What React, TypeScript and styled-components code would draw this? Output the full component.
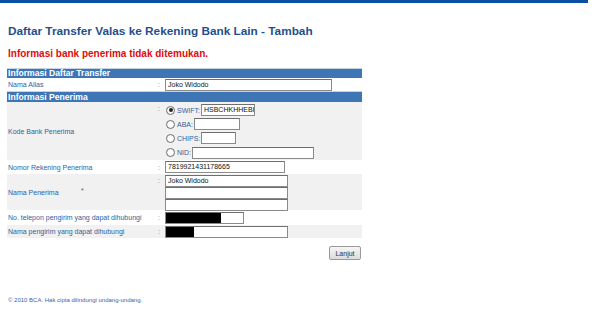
import React from "react";
import styled, { createGlobalStyle } from "styled-components";

const GlobalStyle = createGlobalStyle`
  body {
    margin: 0;
    background: #fff;
    font-family: "Liberation Sans", Arial, sans-serif;
  }
`;

const TopBar = styled.div`
  width: 588px;
  height: 3px;
  background: #0b4fa3;
`;

const Page = styled.div`
  padding: 0 7px;
`;

const Title = styled.h1`
  margin: 21px 0 0 1px;
  font-size: 11.8px;
  font-weight: bold;
  color: #1f4f8e;
  line-height: 15px;
`;

const ErrorText = styled.div`
  margin: 8px 0 0 1px;
  font-size: 10px;
  font-weight: bold;
  color: #e00b0b;
  line-height: 14px;
`;

const FormTable = styled.div`
  width: 355px;
  margin-top: 7px;
  display: flex;
  flex-direction: column;
`;

const SectionHead = styled.div<{ $h: number }>`
  height: ${(p) => p.$h}px;
  background: #3d75b5;
  border-top: 1px solid #c4d3e6;
  color: #fff;
  font-size: 8.6px;
  font-weight: bold;
  line-height: ${(p) => p.$h}px;
  padding-left: 1px;
`;

const Row = styled.div<{ $h: number; $alt?: boolean }>`
  display: grid;
  grid-template-columns: 151px 7px 1fr;
  height: ${(p) => p.$h}px;
  background: ${(p) => (p.$alt ? "#f1f1f1" : "#fff")};
`;

const Label = styled.div`
  display: flex;
  align-items: center;
  padding-left: 1px;
  font-size: 7px;
  color: #2f5f9f;
  position: relative;
`;

const Star = styled.span`
  position: absolute;
  left: 74px;
  top: 13px;
  font-size: 7px;
  color: #555;
`;

const Colon = styled.div<{ $top?: boolean }>`
  display: flex;
  align-items: ${(p) => (p.$top ? "flex-start" : "center")};
  padding-top: ${(p) => (p.$top ? "3px" : "0")};
  font-size: 7px;
  color: #888;
`;

const Cell = styled.div<{ $top?: boolean }>`
  display: flex;
  flex-direction: column;
  justify-content: ${(p) => (p.$top ? "flex-start" : "center")};
  padding-top: ${(p) => (p.$top ? "1px" : "0")};
`;

const TextBox = styled.div<{ $w: number; $h?: number }>`
  box-sizing: border-box;
  width: ${(p) => p.$w}px;
  height: ${(p) => p.$h ?? 12}px;
  border: 1px solid #8a8a8a;
  border-top-color: #6e6e6e;
  background: #fff;
  font-size: 7px;
  color: #111;
  line-height: 10px;
  padding-left: 2px;
  position: relative;
  overflow: hidden;
  white-space: nowrap;
`;

const Redact = styled.div<{ $w: number }>`
  position: absolute;
  left: 0;
  top: 0;
  bottom: 0;
  width: ${(p) => p.$w}px;
  background: #000;
`;

const RadioLine = styled.div<{ $h: number }>`
  display: flex;
  align-items: center;
  height: ${(p) => p.$h}px;
  font-size: 7px;
  color: #2f5f9f;
`;

const Radio = styled.span<{ $on?: boolean }>`
  box-sizing: border-box;
  width: 9px;
  height: 9px;
  margin: 0 2px 0 1px;
  border-radius: 50%;
  border: 1px solid #6f6f6f;
  background: radial-gradient(circle, #fff 40%, #e6e6e6 100%);
  display: flex;
  align-items: center;
  justify-content: center;

  &::after {
    content: "";
    width: 4px;
    height: 4px;
    border-radius: 50%;
    background: ${(p) => (p.$on ? "#222" : "transparent")};
  }
`;

const RadioText = styled.span`
  margin-right: 1px;
`;

const Actions = styled.div`
  width: 355px;
  display: flex;
  justify-content: flex-end;
  margin-top: 8px;
`;

const Button = styled.button`
  box-sizing: border-box;
  width: 32px;
  height: 14px;
  margin-right: 1px;
  padding: 0;
  border: 1px solid #9a9a9a;
  border-radius: 2px;
  background: linear-gradient(#f6f6f6, #dcdcdc);
  font-family: "Liberation Sans", Arial, sans-serif;
  font-size: 7px;
  color: #333;
`;

const Footer = styled.div`
  margin: 37px 0 0 1px;
  font-size: 6px;
  color: #3c63a6;
`;

const banks = [
  { name: "SWIFT:", w: 54, value: "HSBCHKHHEBI", on: true },
  { name: "ABA:", w: 46, value: "" },
  { name: "CHIPS:", w: 35, value: "" },
  { name: "NID:", w: 122, value: "" },
];

export default function App() {
  return (
    <>
      <GlobalStyle />
      <TopBar />
      <Page>
        <Title>Daftar Transfer Valas ke Rekening Bank Lain - Tambah</Title>
        <ErrorText>Informasi bank penerima tidak ditemukan.</ErrorText>

        <FormTable>
          <SectionHead $h={9}>Informasi Daftar Transfer</SectionHead>
          <Row $h={13}>
            <Label>Nama Alias</Label>
            <Colon>:</Colon>
            <Cell>
              <TextBox $w={167}>Joko Widodo</TextBox>
            </Cell>
          </Row>
          <SectionHead $h={10}>Informasi Penerima</SectionHead>
          <Row $h={58} $alt>
            <Label>Kode Bank Penerima</Label>
            <Colon $top>:</Colon>
            <Cell $top>
              {banks.map((b, i) => (
                <RadioLine key={b.name} $h={i === 3 ? 15 : 14}>
                  <Radio $on={b.on} />
                  <RadioText>{b.name}</RadioText>
                  <TextBox $w={b.w}>{b.value}</TextBox>
                </RadioLine>
              ))}
            </Cell>
          </Row>
          <Row $h={14}>
            <Label>Nomor Rekening Penerima</Label>
            <Colon>:</Colon>
            <Cell>
              <TextBox $w={120}>7819921431178665</TextBox>
            </Cell>
          </Row>
          <Row $h={36} $alt>
            <Label>
              Nama Penerima
              <Star>*</Star>
            </Label>
            <Colon $top>:</Colon>
            <Cell $top>
              <TextBox $w={123}>Joko Widodo</TextBox>
              <TextBox $w={123}></TextBox>
              <TextBox $w={123}></TextBox>
            </Cell>
          </Row>
          <Row $h={15}>
            <Label>No. telepon pengirim yang dapat dihubungi</Label>
            <Colon>:</Colon>
            <Cell>
              <TextBox $w={79}>
                <Redact $w={55} />
              </TextBox>
            </Cell>
          </Row>
          <Row $h={13} $alt>
            <Label>Nama pengirim yang dapat dihubungi</Label>
            <Colon>:</Colon>
            <Cell>
              <TextBox $w={123}>
                <Redact $w={28} />
              </TextBox>
            </Cell>
          </Row>
        </FormTable>

        <Actions>
          <Button>Lanjut</Button>
        </Actions>

        <Footer>©  2010 BCA. Hak cipta dilindungi undang-undang.</Footer>
      </Page>
    </>
  );
}
